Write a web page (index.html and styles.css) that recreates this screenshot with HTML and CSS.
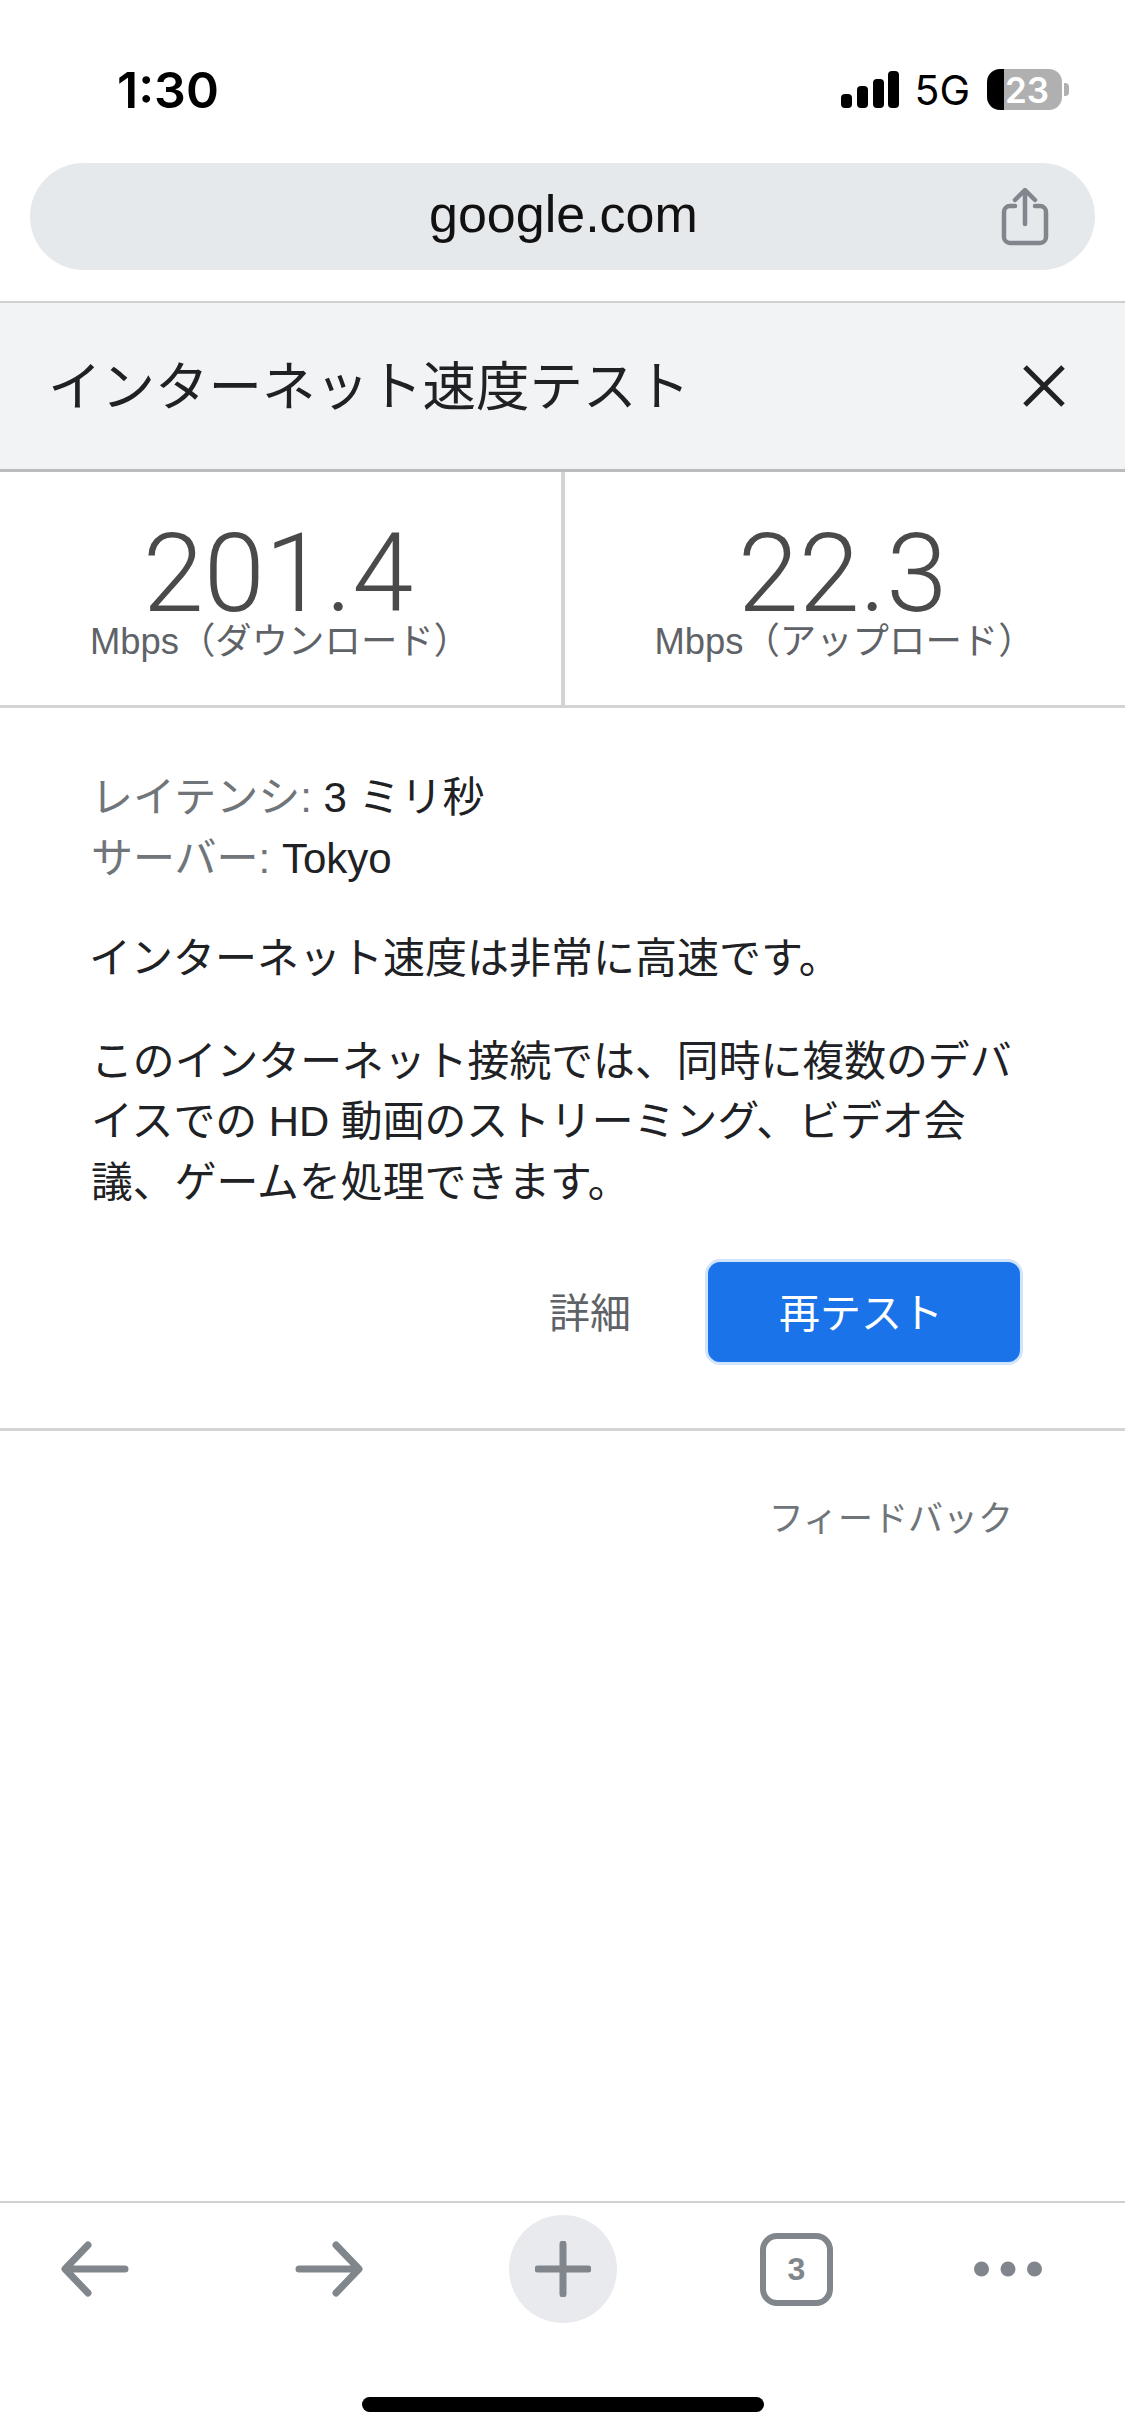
FILE: index.html
```html
<!DOCTYPE html>
<html lang="ja">
<head>
    <meta charset="UTF-8">
    <meta name="viewport" content="width=device-width, initial-scale=1.0">
    <title>インターネット速度テスト</title>
    <link rel="stylesheet" href="styles.css">
</head>
<body>
<div class="screen">
    <header class="status-bar">
        <span class="time">1:30</span>
        <div class="status-icons">
            <svg class="signal" width="58" height="37" viewBox="0 0 58 37" fill="#000" aria-hidden="true">
                <rect x="0" y="23" width="11" height="14" rx="4"></rect>
                <rect x="16" y="15" width="11" height="22" rx="4"></rect>
                <rect x="32" y="8" width="11" height="29" rx="4"></rect>
                <rect x="47" y="0" width="11" height="37" rx="4"></rect>
            </svg>
            <span class="network">5G</span>
            <div class="battery"><span>23</span></div>
            <div class="battery-nub"></div>
        </div>
    </header>

    <div class="url-bar">
        <span class="url">google.com</span>
        <svg class="share" width="48" height="58" viewBox="0 0 48 58" fill="none" stroke="#80868b" stroke-width="4.5" stroke-linecap="round" stroke-linejoin="round" aria-hidden="true">
            <path d="M14 18H9a6 6 0 0 0-6 6v25a6 6 0 0 0 6 6h30a6 6 0 0 0 6-6V24a6 6 0 0 0-6-6h-5"></path>
            <path d="M24 36V3M14 12l10-10 10 10"></path>
        </svg>
    </div>

    <div class="title-bar">
        <h1>インターネット速度テスト</h1>
        <svg class="close" width="42" height="42" viewBox="0 0 42 42" stroke="#202124" stroke-width="5" aria-hidden="true">
            <path d="M2 2l38 38M40 2L2 40"></path>
        </svg>
    </div>

    <section class="results">
        <div class="result result-down">
            <div class="speed">201.4</div>
            <div class="unit">Mbps（ダウンロード）</div>
        </div>
        <div class="result">
            <div class="speed">22.3</div>
            <div class="unit">Mbps（アップロード）</div>
        </div>
    </section>

    <section class="details">
        <p class="meta"><span class="label">レイテンシ:</span> 3 ミリ秒<br><span class="label">サーバー:</span> Tokyo</p>
        <p class="summary">インターネット速度は非常に高速です。</p>
        <p class="desc">このインターネット接続では、同時に複数のデバイスでの HD 動画のストリーミング、ビデオ会議、ゲームを処理できます。</p>
        <div class="actions">
            <span class="more">詳細</span>
            <button class="retest">再テスト</button>
        </div>
    </section>

    <div class="feedback">フィードバック</div>

    <nav class="toolbar">
        <svg width="68" height="56" viewBox="0 0 68 56" fill="none" stroke="#80868b" stroke-width="7" stroke-linecap="round" stroke-linejoin="round" aria-hidden="true">
            <path d="M64 28H5M27 4L4 28l23 24"></path>
        </svg>
        <svg class="forward" width="68" height="56" viewBox="0 0 68 56" fill="none" stroke="#80868b" stroke-width="7" stroke-linecap="round" stroke-linejoin="round" aria-hidden="true">
            <path d="M4 28h59M41 4l23 24-23 24"></path>
        </svg>
        <div class="new-tab">
            <svg width="56" height="56" viewBox="0 0 56 56" stroke="#80868b" stroke-width="7" stroke-linecap="round" aria-hidden="true">
                <path d="M28 3v50M3 28h50"></path>
            </svg>
        </div>
        <div class="tabs">3</div>
        <svg width="68" height="16" viewBox="0 0 68 16" fill="#80868b" aria-hidden="true">
            <circle cx="7.500" cy="8" r="7.500"></circle>
            <circle cx="34" cy="8" r="7.500"></circle>
            <circle cx="60.500" cy="8" r="7.500"></circle>
        </svg>
    </nav>

    <div class="home-area">
        <div class="home-indicator"></div>
    </div>
</div>
</body>
</html>
```

FILE: styles.css
```css
* {
    box-sizing: border-box;
}

body {
    margin: 0;
    background-color: #fff;
    font-family: "Liberation Sans", "Noto Sans CJK JP", sans-serif;
    color: #202124;
}

.screen {
    display: flex;
    flex-direction: column;
    height: 2436px;
    overflow: hidden;
}

/* status bar */
.status-bar {
    display: flex;
    justify-content: space-between;
    align-items: center;
    height: 163px;
    padding: 53px 56px 37px 117px;
}

.time {
    font-family: Inter, "Liberation Sans", sans-serif;
    font-size: 50px;
    font-weight: 600;
    color: #000;
}

.status-icons {
    display: flex;
    align-items: center;
}

.network {
    margin: 0 17px 0 15px;
    font-family: Inter, "Liberation Sans", sans-serif;
    font-size: 41px;
    color: #000;
}

.battery {
    display: flex;
    justify-content: center;
    align-items: center;
    width: 75px;
    height: 41px;
    padding-left: 5px;
    border-radius: 13px;
    background: linear-gradient(to right, #000 17px, #b0b0b0 17px);
    color: #fff;
    font-family: Inter, "Liberation Sans", sans-serif;
    font-size: 35px;
    font-weight: 600;
}

.battery-nub {
    width: 5px;
    height: 13px;
    margin-left: 2px;
    border-radius: 0 4px 4px 0;
    background-color: #b0b0b0;
}

/* address bar */
.url-bar {
    display: flex;
    justify-content: space-between;
    align-items: center;
    flex-shrink: 0;
    height: 107px;
    margin: 0 30px 31px;
    padding: 0 46px 0 399px;
    border-radius: 54px;
    background-color: #e6e9ec;
}

.url {
    margin-bottom: 6px;
    font-size: 52px;
    color: #111;
}

/* title */
.title-bar {
    display: flex;
    justify-content: space-between;
    align-items: center;
    flex-shrink: 0;
    height: 171px;
    padding: 0 60px 0 48px;
    border-top: 2px solid #cfcfcf;
    border-bottom: 3px solid #b9bbbc;
    background-color: #f1f3f4;
}

h1 {
    margin: 0 0 8px;
    font-size: 53.500px;
    font-weight: 400;
}

/* speed results */
.results {
    display: grid;
    grid-template-columns: 565px 1fr;
    flex-shrink: 0;
    height: 236px;
    border-bottom: 3px solid #d3d3d3;
}

.result {
    padding-top: 53px;
    text-align: center;
}

.result-down {
    border-right: 4px solid #d3d3d3;
}

.speed {
    padding-right: 5px;
    font-family: Roboto, "Liberation Sans", sans-serif;
    font-size: 110px;
    font-weight: 300;
    line-height: 97px;
    color: #4a4a4a;
}

.unit {
    padding-right: 1px;
    font-size: 36.400px;
    line-height: 40px;
    color: #5f6368;
    white-space: nowrap;
}

/* text block */
.details {
    flex-shrink: 0;
    height: 723px;
    padding: 60px 90px 0 91px;
    border-bottom: 3px solid #d5d5d5;
    font-size: 42px;
    line-height: 60.500px;
}

.details p {
    margin: 0 0 40px;
}

.label {
    color: #70757a;
}

.details .summary {
    margin: 0 0 42px -2px;
}

.desc {
    font-size: 41.850px;
}

.actions {
    display: flex;
    justify-content: flex-end;
    align-items: center;
    gap: 74px;
    margin-top: 46px;
    padding-right: 12px;
}

.more {
    margin-top: 4px;
    font-size: 41px;
    color: #5f6368;
}

.retest {
    width: 318px;
    height: 106px;
    padding: 0 6px 4px 0;
    border: 3px solid #d2e3fc;
    border-radius: 15px;
    background-color: #1a73e8;
    color: #fff;
    font-family: inherit;
    font-size: 41px;
}

.feedback {
    flex: 1;
    padding: 64px 112px 0 0;
    font-size: 35px;
    line-height: 48px;
    color: #70757a;
    text-align: right;
}

/* bottom toolbar */
.toolbar {
    display: flex;
    align-items: center;
    gap: 143px;
    flex-shrink: 0;
    height: 134px;
    padding: 0 0 0 61px;
    border-top: 2px solid #d0d0d0;
}

.forward {
    margin-left: 23px;
}

.new-tab {
    display: flex;
    justify-content: center;
    align-items: center;
    width: 108px;
    height: 108px;
    margin-left: 3px;
    border-radius: 50%;
    background-color: #e8eaed;
}

.tabs {
    display: flex;
    justify-content: center;
    align-items: center;
    width: 73px;
    height: 73px;
    margin-right: -2px;
    border: 6px solid #80868b;
    border-radius: 17px;
    color: #80868b;
    font-size: 32px;
    font-weight: 700;
}

.home-area {
    display: flex;
    justify-content: center;
    flex-shrink: 0;
    height: 101px;
    padding-top: 62px;
}

.home-indicator {
    width: 402px;
    height: 15px;
    border-radius: 8px;
    background-color: #000;
}
```
